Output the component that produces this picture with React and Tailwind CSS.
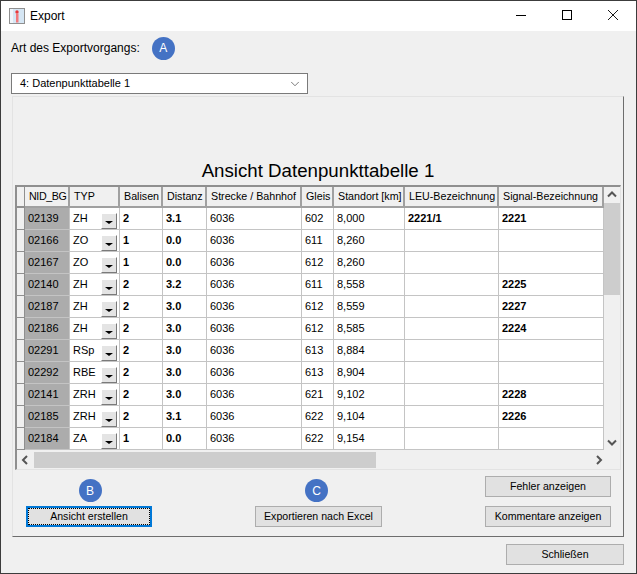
import { ChevronDown } from "lucide-react";

const columns = ["NID_BG", "TYP", "Balisen", "Distanz", "Strecke / Bahnhof", "Gleis", "Standort [km]", "LEU-Bezeichnung", "Signal-Bezeichnung"];

const rows = [
    ["02139", "ZH", "2", "3.1", "6036", "602", "8,000", "2221/1", "2221"],
    ["02166", "ZO", "1", "0.0", "6036", "611", "8,260", "", ""],
    ["02167", "ZO", "1", "0.0", "6036", "612", "8,260", "", ""],
    ["02140", "ZH", "2", "3.2", "6036", "611", "8,558", "", "2225"],
    ["02187", "ZH", "2", "3.0", "6036", "612", "8,559", "", "2227"],
    ["02186", "ZH", "2", "3.0", "6036", "612", "8,585", "", "2224"],
    ["02291", "RSp", "2", "3.0", "6036", "613", "8,884", "", ""],
    ["02292", "RBE", "2", "3.0", "6036", "613", "8,904", "", ""],
    ["02141", "ZRH", "2", "3.0", "6036", "621", "9,102", "", "2228"],
    ["02185", "ZRH", "2", "3.1", "6036", "622", "9,104", "", "2226"],
    ["02184", "ZA", "1", "0.0", "6036", "622", "9,154", "", ""],
];

const gridCols = "grid grid-cols-[8px_45px_50px_43px_44px_95px_32px_71px_94px_105px]";

function Badge({ letter, className }) {
    return (
        <div className={`w-[23px] h-[23px] rounded-full bg-[#4472c4] text-white text-[12px] flex items-center justify-center ${className || ""}`}>
            {letter}
        </div>
    );
}

function Button({ children, width, focused }) {
    if (focused) {
        return (
            <button className={`${width} h-[21px] border-2 border-[#0078d7] bg-[#e1e1e1] p-0 text-[10.6px] text-black`}>
                <span className="flex h-full items-center justify-center border border-dotted border-black">{children}</span>
            </button>
        );
    }
    return (
        <button className={`${width} h-[21px] border border-[#adadad] bg-[#e1e1e1] text-[10.6px] text-black whitespace-nowrap`}>
            {children}
        </button>
    );
}

function TitleIcon() {
    return (
        <svg width="16" height="16" viewBox="0 0 16 16" className="shrink-0">
            <rect x="0.5" y="0.5" width="15" height="15" fill="#d5e6f4" stroke="#8f8f8f" />
            <rect x="1" y="1" width="3" height="14" fill="#f0f5fa" />
            <circle cx="8" cy="4" r="1.7" fill="#e8383a" />
            <rect x="7" y="5.5" width="2.5" height="9" fill="#f2797b" />
        </svg>
    );
}

function WindowControls() {
    return (
        <div className="ml-auto mb-[2px] flex items-center">
            <div className="w-[46px] flex justify-center">
                <svg width="10" height="10" viewBox="0 0 10 10"><path d="M0 5.5h10" stroke="#000" fill="none" /></svg>
            </div>
            <div className="w-[46px] flex justify-center">
                <svg width="10" height="10" viewBox="0 0 10 10"><rect x="0.5" y="0.5" width="9" height="9" stroke="#000" fill="none" /></svg>
            </div>
            <div className="w-[46px] flex justify-center">
                <svg width="10" height="10" viewBox="0 0 10 10"><path d="M0 0l10 10M10 0 0 10" stroke="#000" strokeWidth="0.9" fill="none" /></svg>
            </div>
        </div>
    );
}

function Row({ row }) {
    const cell = "h-[22px] border-r border-b border-[#c4c4c4] flex items-center pl-[3px] overflow-hidden whitespace-nowrap";
    return (
        <div className={`${gridCols} text-[11px] text-black`}>
            <div className="h-[22px] bg-[#f0f0f0] border-r border-b border-[#8f8f8f]"></div>
            <div className={`${cell} bg-[#acacac]`}>{row[0]}</div>
            <div className={`${cell} bg-white justify-between pr-[2px]`}>
                <span>{row[1]}</span>
                <span className="self-end w-[16px] h-[16px] bg-[#e4e4e4] border border-t-white border-l-white border-r-[#7a7a7a] border-b-[#7a7a7a] flex items-center justify-center">
                    <span className="mt-[3px] border-x-[4px] border-t-[3px] border-x-transparent border-t-black"></span>
                </span>
            </div>
            <div className={`${cell} bg-white font-bold`}>{row[2]}</div>
            <div className={`${cell} bg-white font-bold`}>{row[3]}</div>
            <div className={`${cell} bg-white`}>{row[4]}</div>
            <div className={`${cell} bg-white`}>{row[5]}</div>
            <div className={`${cell} bg-white`}>{row[6]}</div>
            <div className={`${cell} bg-white font-bold`}>{row[7]}</div>
            <div className={`${cell} bg-white font-bold`}>{row[8]}</div>
        </div>
    );
}

export default function App() {
    return (
        <div className="w-[637px] h-[574px] flex flex-col overflow-hidden border border-[#3c3c3c] bg-[#f0f0f0] font-['Liberation_Sans',sans-serif]">
            {/* title bar */}
            <div className="h-[30px] shrink-0 bg-white flex items-center pl-[8px]">
                <TitleIcon />
                <span className="ml-[5px] text-[12px] text-black">Export</span>
                <WindowControls />
            </div>

            <div className="flex-1 flex flex-col pl-[10px] pr-[12px]">
                <div className="h-[34px] flex items-center gap-[12px]">
                    <span className="text-[12px] text-black">Art des Exportvorgangs:</span>
                    <Badge letter="A" />
                </div>

                <div className="mt-[8px] w-[297px] h-[21px] bg-white border border-[#7a7a7a] flex items-center justify-between pl-[8px] pr-[5px] text-[11px] text-black">
                    <span>4: Datenpunkttabelle 1</span>
                    <ChevronDown size={14} strokeWidth={1.2} className="text-[#444]" />
                </div>

                {/* main panel */}
                <div className="mt-[2px] ml-[1px] w-[612px] h-[441px] border border-t-[#e3e3e3] border-l-[#e3e3e3] border-r-[#6d6d6d] border-b-[#6d6d6d] flex flex-col">
                    <div className="h-[88px] shrink-0 flex items-end justify-center text-[18.7px] leading-[22px] text-black pb-[3px]">
                        Ansicht Datenpunkttabelle 1
                    </div>

                    {/* table */}
                    <div className="ml-[2px] w-[606px] h-[285px] border border-t-[#8f8f8f] border-t-2 border-l-[#8f8f8f] border-l-2 border-r-[#e3e3e3] border-b-[#e3e3e3] flex flex-col overflow-hidden">
                        <div className="flex flex-1 min-h-0">
                            <div className="w-[587px] shrink-0 overflow-hidden">
                                <div className={`${gridCols} text-[10.7px] text-black`}>
                                    <div className="h-[21px] border-r border-b-2 border-[#8f8f8f]"></div>
                                    {columns.map((name) => (
                                        <div key={name} className={`h-[21px] border-r-2 border-b-2 border-[#a0a0a0] flex items-center pl-[4px] whitespace-nowrap overflow-hidden ${name === "NID_BG" ? "tracking-[-0.4px]" : ""}`}>
                                            {name}
                                        </div>
                                    ))}
                                </div>
                                {rows.map((row) => (
                                    <Row key={row[0]} row={row} />
                                ))}
                            </div>
                            {/* vertical scrollbar */}
                            <div className="flex-1 flex flex-col items-center bg-[#f0f0f0] text-[#555]">
                                <svg width="16" height="16" viewBox="0 0 16 16" className="shrink-0"><path d="M4 9.5 8 5.5l4 4" fill="none" stroke="currentColor" strokeWidth="2" /></svg>
                                <div className="w-[16px] h-[92px] bg-[#cdcdcd]"></div>
                                <div className="flex-1"></div>
                                <svg width="16" height="16" viewBox="0 0 16 16" className="shrink-0"><path d="M4 6.5 8 10.5l4-4" fill="none" stroke="currentColor" strokeWidth="2" /></svg>
                            </div>
                        </div>
                        {/* horizontal scrollbar */}
                        <div className="h-[16px] shrink-0 mt-[2px] mb-[1px] flex items-center bg-[#f0f0f0] text-[#555]">
                            <svg width="17" height="16" viewBox="0 0 17 16" className="shrink-0"><path d="M10 4 6 8l4 4" fill="none" stroke="currentColor" strokeWidth="2" /></svg>
                            <div className="w-[342px] h-full bg-[#cdcdcd]"></div>
                            <div className="flex-1"></div>
                            <svg width="30" height="16" viewBox="0 0 30 16" className="shrink-0"><path d="M7 4l4 4-4 4" fill="none" stroke="currentColor" strokeWidth="2" /></svg>
                        </div>
                    </div>

                    {/* panel buttons */}
                    <div className="flex-1 flex items-end pb-[9px] pl-[13px] pr-[12px]">
                        <div className="flex flex-col items-center w-[126px]">
                            <Badge letter="B" className="ml-[2px]" />
                            <div className="h-[4px]"></div>
                            <Button width="w-[126px]" focused>Ansicht erstellen</Button>
                        </div>
                        <div className="ml-[103px] flex flex-col items-center w-[127px]">
                            <Badge letter="C" className="mr-[4px]" />
                            <div className="h-[4px]"></div>
                            <Button width="w-[127px]">Exportieren nach Excel</Button>
                        </div>
                        <div className="ml-auto flex flex-col gap-[9px]">
                            <Button width="w-[126px]">Fehler anzeigen</Button>
                            <Button width="w-[126px]">Kommentare anzeigen</Button>
                        </div>
                    </div>
                </div>

                <div className="mt-[7px] flex justify-end">
                    <Button width="w-[118px]">Schließen</Button>
                </div>
            </div>
        </div>
    );
}
